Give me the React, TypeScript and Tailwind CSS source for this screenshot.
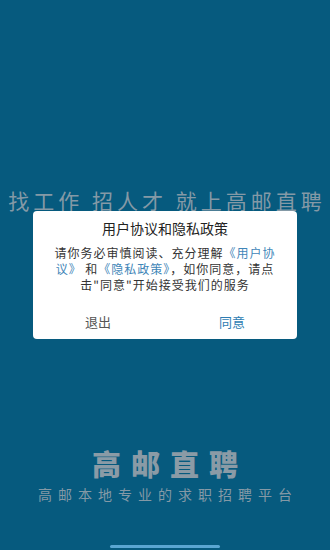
export default function App() {
  return (
    <div
      className="relative w-[330px] h-[550px] overflow-hidden bg-[#065a7e] flex flex-col items-center"
      style={{ fontFamily: '"Noto Sans CJK SC", "Noto Sans", sans-serif' }}
    >
      <div className="mt-[187px] text-[21px] leading-[26px] tracking-[4px] pl-[4px] text-[#8499a6] whitespace-nowrap">
        找工作 招人才 就上高邮直聘
      </div>

      <div className="mt-[-2px] w-[264px] bg-white rounded-[4px] flex flex-col items-center">
        <div className="mt-[8px] text-[14px] leading-[18px] text-[#222]">用户协议和隐私政策</div>
        <p className="mt-[8px] px-[18px] text-center text-[12px] leading-[16px] tracking-[1px] text-[#333]">
          请你务必审慎阅读、充分理解<span className="text-[#3f86b8]">《用户协议》</span> 和 
          <span className="text-[#3f86b8]">《隐私政策》</span>，如你同意，请点击"同意"开始接受我们的服务
        </p>
        <div className="mt-[20px] mb-[8px] w-full flex">
          <div className="flex-1 text-center text-[13px] leading-[18px] text-[#555] pr-[4px]">退出</div>
          <div className="flex-1 text-center text-[13px] leading-[18px] text-[#2d7db3]">同意</div>
        </div>
      </div>

      <div className="mt-[108px] text-[29px] leading-[32px] font-black tracking-[10px] pl-[10px] text-[#8a9ba6] whitespace-nowrap">
        高邮直聘
      </div>
      <div className="mt-[6px] text-[14px] leading-[18px] tracking-[6px] pl-[6px] text-[#8499a6] whitespace-nowrap">
        高邮本地专业的求职招聘平台
      </div>

      <div className="absolute bottom-[2px] left-[110px] w-[110px] h-[3px] rounded-full bg-[#5aa6d2]" />
    </div>
  );
}
